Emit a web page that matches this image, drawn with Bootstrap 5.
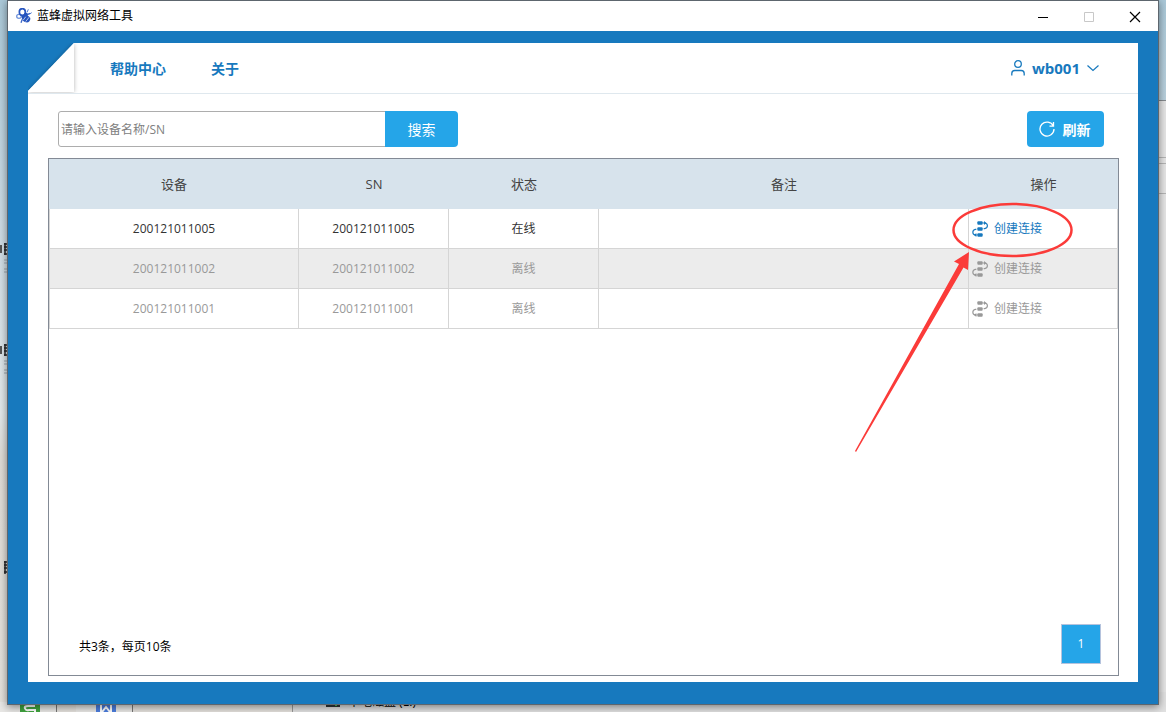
<!DOCTYPE html>
<html lang="zh-CN">
<head>
<meta charset="utf-8">
<meta name="viewport" content="width=device-width, initial-scale=1">
<title>蓝蜂虚拟网络工具</title>
<link href="https://cdn.jsdelivr.net/npm/bootstrap@5.3.0/dist/css/bootstrap.min.css" rel="stylesheet">
<style>
  :root { --brand: #1779be; --sky: #25a5e8; --rule: #d5d5d5; --frame: #838a95; }
  body {
    font-family: "Open Sans", "Noto Sans CJK SC", sans-serif;
    font-size: 12px; line-height: 18px; color: #000;
    background: linear-gradient(#aac8d8, #cfdce4 35%, #e2e8ea 58%, #dedbd6 64%, #e4e1dc);
    padding: 0 7px 7px;
  }
  button, input { font-family: inherit; }
  /* desktop behind the application window */
  .desk { inset: 0; z-index: 0; }
  .desk > * { position: absolute; }
  .explorer { top: 100px; right: 0; width: 40px; bottom: 0; background: #e5e5e5; border-top: 1px solid #868a8e; }
  .explorer .pane-1 { height: 57px; border-bottom: 1px solid #b5b5b5; }
  .explorer .pane-2 { height: 6px; border-bottom: 1px solid #b5b5b5; }
  .explorer .pane-3 { height: 30px; border-bottom: 1px solid #b5b5b5; }
  .drives { left: 292px; right: 0; bottom: 0; height: 20px; background: #e1e1e1; border-left: 1px solid #999; }
  .disk { left: 326px; bottom: 5px; }
  .drive-name { left: 348px; bottom: 1px; }
  .tile { bottom: 0; width: 20px; height: 10px; }
  .tile-s { left: 20px; }
  .tile-w { left: 96px; }
  .sheet { left: 0; width: 57px; bottom: 0; height: 10px; background: #e8e7e5; border-right: 1px solid #777; }
  .doc { left: 76px; width: 57px; bottom: 0; height: 10px; background: #e8e7e5; border-right: 1px solid #777; }
  .label-edge { left: 0; }
  .edge-1 { top: 242px; }
  .edge-2 { top: 343px; }
  .edge-3 { top: 560px; }
  /* window */
  .app-window { z-index: 1; background: var(--brand); border: 1px solid #5d666e; box-shadow: 0 2px 8px rgba(0,0,0,.45); }
  .titlebar { height: 30px; background: #fff; padding-left: 8px; gap: 5px; }
  .win-btn { width: 46px; height: 28px; border: 0; background: none; padding: 0; }
  .window-btns { margin-right: 0; }
  .stage { padding: 12px 20px 22px; }
  .topbar { height: 51px; border-bottom: 1px solid #dfe8ee; padding-right: 39px; }
  .menu { gap: 45px; padding: 2px 0 0 30px; }
  .menu a { font-size: 14px; font-weight: 700; color: var(--brand); text-decoration: none; }
  .user { font-size: 15px; font-weight: 700; color: var(--brand); border: 0; background: none; padding: 0; gap: 7px; }
  .tools { padding: 17px 34px 11px 30px; }
  .search-box { width: 400px; height: 36px; }
  .search-box .form-control { font-size: 12px; padding: 2px 2px 0; border: 1px solid #adadad; border-radius: 3px 0 0 3px; }
  .search-box .form-control::placeholder { color: #808080; }
  .search-box .btn { width: 73px; font-size: 14px; padding: 0; border-radius: 0 4px 4px 0; }
  .btn-sky { background: var(--sky); color: #fff; border: 0; }
  .btn-sky:hover { background: #1b93d2; color: #fff; }
  .refresh { width: 77px; height: 36px; font-size: 14px; font-weight: 700; padding: 0 2px 0 0; gap: 8px; border-radius: 4px; }
  .list-box { margin: 0 19px 6px 20px; border: 1px solid var(--frame); }
  .devices { table-layout: fixed; border-collapse: separate; border-spacing: 0; width: 100%; text-align: center; }
  .devices th { height: 50px; background: #d7e3ec; color: #444; font-size: 13px; font-weight: 400; padding: 0; }
  .devices td { height: 40px; padding: 0; border: solid var(--rule); border-width: 0 1px 1px 0; color: #333; }
  .devices td:first-child { border-left-width: 1px; }
  .devices tr.off td { color: #999; }
  .devices tr.alt td { background: #ececec; }
  .col-device { width: 250px; }
  .col-mid { width: 150px; }
  .col-act { width: 149px; }
  .connect { border: 0; background: none; padding: 0 0 0 3px; gap: 6px; color: var(--brand); }
  .connect:disabled { color: #999; }
  .callout { left: -116px; top: -10px; z-index: 2; pointer-events: none; }
  .list-foot { padding: 0 17px 11px 30px; }
  .total { padding-top: 5px; }
  .page-no { width: 40px; height: 40px; font-size: 12px; background: var(--sky); color: #fff; border: 1px solid #b5c3dd; padding: 0; }
</style>
</head>
<body class="vh-100 d-flex flex-column position-relative overflow-hidden">

<svg class="d-none" xmlns="http://www.w3.org/2000/svg">
  <symbol id="link-steps" viewBox="0 0 48 48">
    <g fill="currentColor"><rect x="16" y="1" width="16" height="10" rx="3"/><rect x="16" y="19" width="16" height="10" rx="3"/><rect x="16" y="37" width="16" height="10" rx="3"/><path d="M36 0l7 6-7 6zM13 36v12l-7-6z"/></g>
    <path d="M32 6h6c11 1 11 15 0 17h-3M13 25h-3c-10 2-10 15 0 17h6" fill="none" stroke="currentColor" stroke-width="3.500"/>
  </symbol>
  <symbol id="label-mark" viewBox="0 0 8 32">
    <path d="M0 3h2v8H0z" fill="#555"/>
    <path d="M4 2h4M4 5h4M4 8h4M4 12h4M5 1v12" stroke="#28282a" stroke-width="1.500"/>
    <path d="M4 18h4M4 21h4M4 27h4M4 30h4" stroke="#9aa5ac"/>
  </symbol>
</svg>

<div class="desk position-absolute overflow-hidden" aria-hidden="true">
  <div class="explorer"><div class="pane-1"></div><div class="pane-2"></div><div class="pane-3"></div></div>
  <div class="sheet"></div><div class="doc"></div>
  <svg class="tile tile-s" viewBox="0 0 20 10"><path fill="#40a53f" d="M0 0h20v10H0z"/><path d="M15 4H8Q4 4 5 6.500T9 8h6v2" fill="none" stroke="#fff" stroke-width="2"/></svg>
  <svg class="tile tile-w" viewBox="0 0 20 10"><path fill="#4c7ede" d="M0 0h20v10H0z"/><path d="M5 3v7M15 3v7M6 10l4-5 4 5" fill="none" stroke="#fff" stroke-width="2"/></svg>
  <div class="drives"></div>
  <svg class="disk" width="14" height="8"><path fill="#303638" d="M0 0h14v8H0z"/><path fill="#45c75e" d="M9 5h2v2H9z"/></svg>
  <div class="drive-name">本地磁盘 (E:)</div>
  <svg class="label-edge edge-1" width="8" height="32"><use href="#label-mark"/></svg>
  <svg class="label-edge edge-2" width="8" height="32"><use href="#label-mark"/></svg>
  <svg class="label-edge edge-3" width="8" height="15" viewBox="0 0 8 15"><path d="M4 2h4M4 5h4M4 8h4M4 12h4M5 1v13" stroke="#28282a" stroke-width="1.500"/></svg>
</div>

<main class="app-window position-relative flex-grow-1 d-flex flex-column">
  <header class="titlebar d-flex align-items-center">
    <svg width="16" height="16" viewBox="0 0 48 48" aria-hidden="true">
      <g fill="none"><ellipse cx="9" cy="25" rx="7" ry="6" stroke-width="4" stroke="#7396dc"/><ellipse cx="19" cy="12" rx="9" ry="10" stroke="#2856c0" stroke-width="5"/></g>
      <path d="M17 24c6-6 21-3 26 6 1 9-6 15-14 13-8-2-12-9-12-19z" fill="#2453bd"/>
      <path d="M30 25l-8 11M39 28l-10 13" stroke="#fff" stroke-width="2"/>
      <path d="M19 34l-4 10M34 20l8-4" stroke="#3a66c8" stroke-width="4"/>
      <circle cx="30" cy="20" r="6" fill="#2453bd"/><path d="M33 13l4-9M41 18l6-4" stroke="#4a76d0" stroke-width="3"/>
    </svg>
    <span class="me-auto">蓝蜂虚拟网络工具</span>
    <div class="d-flex">
      <button class="win-btn" aria-label="最小化"><svg width="12" height="12"><path d="M1 6.500h10" stroke="#000"/></svg></button>
      <button class="win-btn" aria-label="最大化" disabled><svg width="12" height="12"><path d="M1.500 1.500h9v9h-9z" fill="none" stroke="#c8c8c8"/></svg></button>
      <button class="win-btn" aria-label="关闭"><svg width="12" height="12"><path d="M1 1l10 10M11 1L1 11" stroke="#000" stroke-width="1.200"/></svg></button>
    </div>
  </header>

  <div class="stage flex-grow-1 d-flex flex-column">
    <section class="bg-white flex-grow-1 d-flex flex-column">
      <nav class="topbar d-flex align-items-center">
        <svg width="52" height="50" viewBox="0 0 52 50" class="align-self-start" aria-hidden="true">
          <defs><filter id="fold" x="-20%" y="-20%" width="140%" height="140%"><feDropShadow dx="0" dy="0" stdDeviation="2" flood-opacity=".3"/></filter></defs>
          <path fill="#1779be" d="M0 0h46L0 48z"/>
          <path fill="#fff" filter="url(#fold)" d="M46 0v49H0v-1z"/>
        </svg>
        <div class="menu d-flex me-auto">
          <a href="#help">帮助中心</a>
          <a href="#about">关于</a>
        </div>
        <button class="user d-flex align-items-center">
          <svg width="14" height="16" viewBox="0 0 14 16" fill="none" stroke="currentColor" stroke-width="1.300"><circle cx="7" cy="4" r="3.300"/><path d="M.8 15.500v-2q0-3 3-3h6.400q3 0 3 3v2"/></svg>
          <span>wb001</span>
          <svg width="12" height="8" viewBox="0 0 12 8" fill="none" stroke="currentColor" stroke-width="1.200"><path d="M.5 1.500l5.500 5 5.500-5"/></svg>
        </button>
      </nav>

      <div class="tools d-flex justify-content-between">
        <form class="search-box input-group flex-nowrap" onsubmit="return false">
          <input class="form-control" type="text" placeholder="请输入设备名称/SN" aria-label="请输入设备名称/SN">
          <button class="btn btn-sky" type="submit">搜索</button>
        </form>
        <button class="btn btn-sky refresh d-flex align-items-center justify-content-center">
          <svg width="16" height="16" viewBox="0 0 16 16" fill="none" stroke="currentColor" stroke-width="1.300"><path d="M14.300 5A7 7 0 1 0 15 8M14.500 1v4.200h-4"/></svg>
          <span>刷新</span>
        </button>
      </div>

      <div class="list-box flex-grow-1 d-flex flex-column">
        <table class="devices">
          <colgroup><col class="col-device"><col class="col-mid"><col class="col-mid"><col><col class="col-act"></colgroup>
          <thead><tr><th>设备</th><th>SN</th><th>状态</th><th>备注</th><th>操作</th></tr></thead>
          <tbody>
            <tr><td>200121011005</td><td>200121011005</td><td>在线</td><td></td>
              <td class="position-relative"><button class="connect d-flex align-items-center"><svg width="16" height="16" aria-hidden="true"><use href="#link-steps"/></svg>创建连接</button>
                <svg class="callout position-absolute" width="222" height="256" viewBox="853 199 222 256" aria-hidden="true">
                  <ellipse cx="1012.500" cy="230" rx="59" ry="26" fill="none" stroke="#fb3b39" stroke-width="2.500"/>
                  <path fill="#fb3b39" d="M969 252l-1 18-4.500-2.500L856 452l-1-1L959 264l-5-2.500z"/>
                </svg></td></tr>
            <tr class="off alt"><td>200121011002</td><td>200121011002</td><td>离线</td><td></td>
              <td><button class="connect d-flex align-items-center" disabled><svg width="16" height="16" aria-hidden="true"><use href="#link-steps"/></svg>创建连接</button></td></tr>
            <tr class="off"><td>200121011001</td><td>200121011001</td><td>离线</td><td></td>
              <td><button class="connect d-flex align-items-center" disabled><svg width="16" height="16" aria-hidden="true"><use href="#link-steps"/></svg>创建连接</button></td></tr>
          </tbody>
        </table>
        <div class="list-foot mt-auto d-flex align-items-center justify-content-between">
          <span class="total">共3条，每页10条</span>
          <button class="page-no" aria-current="page">1</button>
        </div>
      </div>
    </section>
  </div>
</main>
<script src="https://cdn.jsdelivr.net/npm/bootstrap@5.3.0/dist/js/bootstrap.bundle.min.js"></script>
</body>
</html>
